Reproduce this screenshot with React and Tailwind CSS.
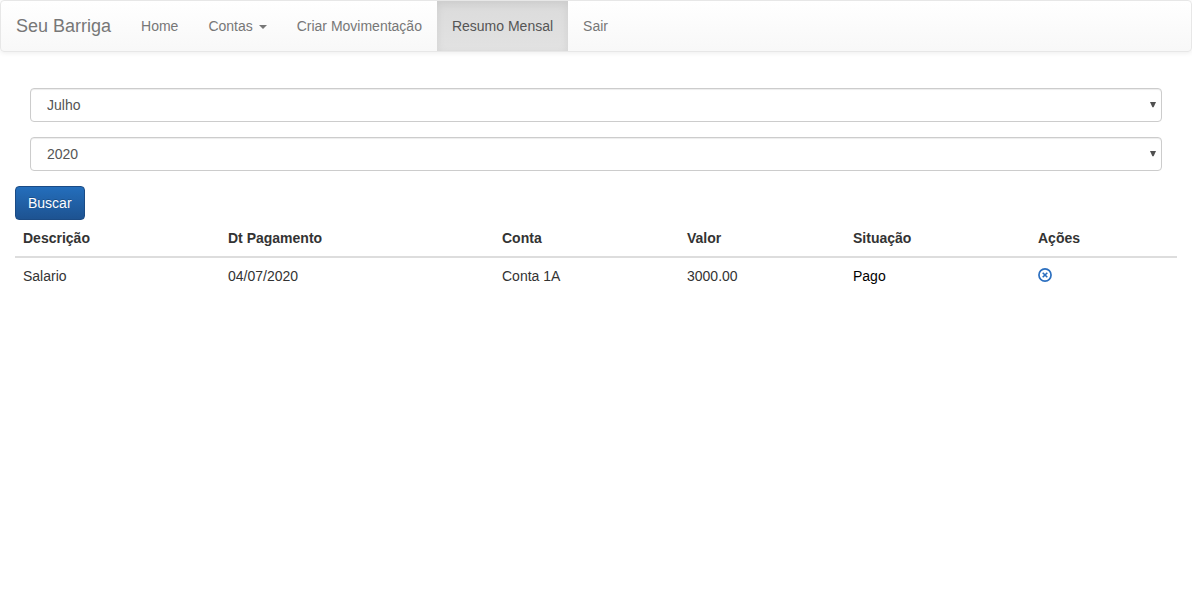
const links = [
  { label: "Home" },
  { label: "Contas", caret: true },
  { label: "Criar Movimentação" },
  { label: "Resumo Mensal", active: true },
  { label: "Sair" },
];

function Navbar() {
  return (
    <nav className="flex h-[52px] rounded-[4px] border border-[#e7e7e7] bg-linear-to-b from-white to-[#f8f8f8] shadow-[0_1px_5px_rgba(0,0,0,0.075)]">
      <a href="#" className="px-[15px] py-[15px] text-[18px] leading-5 text-[#777]">
        Seu Barriga
      </a>
      <ul className="flex">
        {links.map((l) => (
          <li key={l.label}>
            <a
              href="#"
              className={
                l.active
                  ? "block bg-linear-to-b from-[#dbdbdb] to-[#e2e2e2] px-[15px] py-[15px] text-[#555] shadow-[inset_0_3px_9px_rgba(0,0,0,0.075)]"
                  : "block px-[15px] py-[15px] text-[#777]"
              }
            >
              {l.label}
              {l.caret && (
                <>
                  {" "}
                  <span className="ml-[2px] inline-block size-0 border-x-4 border-t-4 border-x-transparent border-t-[#777] align-middle" />
                </>
              )}
            </a>
          </li>
        ))}
      </ul>
    </nav>
  );
}

function Select({ value }) {
  return (
    <div className="relative mb-[15px]">
      <select className="block h-[34px] w-full appearance-none rounded-[4px] border border-[#ccc] bg-white px-4 text-[14px] text-[#555] shadow-[inset_0_1px_1px_rgba(0,0,0,0.075)]">
        <option>{value}</option>
      </select>
      <svg className="pointer-events-none absolute top-[14px] right-[6px]" width="6" height="6" viewBox="0 0 6 6">
        <path d="M0 0H6L3.6 5.3H2.4Z" fill="#505050" />
      </svg>
    </div>
  );
}

function RemoveIcon() {
  return (
    <svg width="14" height="14" viewBox="0 0 14 14" fill="none" stroke="#2a6ebf">
      <circle cx="7" cy="7" r="6.05" strokeWidth="1.7" />
      <path d="M4.7 4.7L9.3 9.3M9.3 4.7L4.7 9.3" strokeWidth="1.6" />
    </svg>
  );
}

export default function App() {
  return (
    <div className="min-h-screen bg-white font-['Liberation_Sans',Arial,sans-serif] text-[14px] leading-5 text-[#333]">
      <Navbar />
      <main className="px-[15px] pt-9">
        <form>
          <div className="px-[15px]">
            <Select value="Julho" />
            <Select value="2020" />
          </div>
          <button
            type="button"
            className="block h-[34px] rounded-[4px] border border-[#1b4b85] bg-linear-to-b from-[#246fbd] to-[#1d5290] bg-origin-border px-3 text-white [text-shadow:0_-1px_0_rgba(0,0,0,0.2)]"
          >
            Buscar
          </button>
        </form>
        <table className="w-full table-fixed border-collapse text-left">
          <colgroup>
            <col className="w-[205px]" />
            <col className="w-[274px]" />
            <col className="w-[185px]" />
            <col className="w-[166px]" />
            <col className="w-[185px]" />
            <col className="w-[147px]" />
          </colgroup>
          <thead>
            <tr className="border-b-2 border-[#ddd]">
              {["Descrição", "Dt Pagamento", "Conta", "Valor", "Situação", "Ações"].map((h) => (
                <th key={h} className="p-2 font-bold">{h}</th>
              ))}
            </tr>
          </thead>
          <tbody>
            <tr>
              <td className="p-2">Salario</td>
              <td className="p-2">04/07/2020</td>
              <td className="p-2">Conta 1A</td>
              <td className="p-2">3000.00</td>
              <td className="p-2 text-black">Pago</td>
              <td className="p-2">
                <a href="#" aria-label="Remover" className="block pb-0.5">
                  <RemoveIcon />
                </a>
              </td>
            </tr>
          </tbody>
        </table>
      </main>
    </div>
  );
}
